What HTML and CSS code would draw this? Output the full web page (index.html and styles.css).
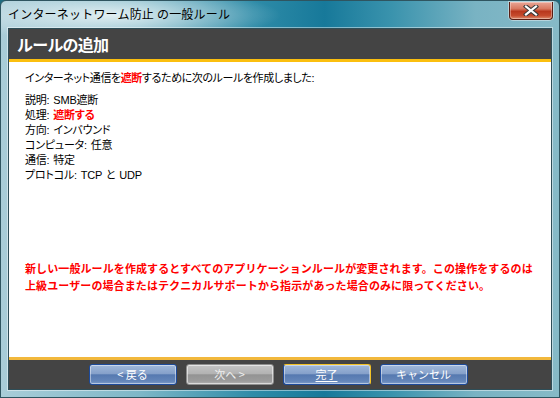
FILE: index.html
```html
<!DOCTYPE html>
<html lang="ja">
<head>
<meta charset="utf-8">
<title>インターネットワーム防止 の一般ルール</title>
<link rel="stylesheet" href="styles.css">
</head>
<body>
<div class="window">
  <div class="titlebar">
    <span class="title">インターネットワーム防止 の一般ルール</span>
    <button class="close" aria-label="閉じる">
      <svg width="16" height="11" viewBox="0 0 16 11">
        <path d="M3 1.5 L13 9.5 M13 1.5 L3 9.5" stroke="#3a3a3a" stroke-width="4.2" stroke-linecap="square"/>
        <path d="M3 1.5 L13 9.5 M13 1.5 L3 9.5" stroke="#ffffff" stroke-width="2.2" stroke-linecap="square"/>
      </svg>
    </button>
  </div>
  <div class="client">
    <div class="header">ルールの追加</div>
    <div class="content">
      <p class="intro">インターネット通信を<b class="red">遮断</b>するために次のルールを作成しました:</p>
      <ul class="props">
        <li>説明: SMB遮断</li>
        <li>処理: <b class="red">遮断する</b></li>
        <li>方向: インバウンド</li>
        <li>コンピュータ: 任意</li>
        <li>通信: 特定</li>
        <li>プロトコル: TCP と UDP</li>
      </ul>
      <p class="warning">新しい一般ルールを作成するとすべてのアプリケーションルールが変更されます。この操作をするのは<br>上級ユーザーの場合またはテクニカルサポートから指示があった場合のみに限ってください。</p>
    </div>
    <div class="footer">
      <button class="btn">&lt; 戻る</button>
      <button class="btn disabled">次へ &gt;</button>
      <button class="btn default"><u>完了</u></button>
      <button class="btn">キャンセル</button>
    </div>
  </div>
</div>
</body>
</html>
```

FILE: styles.css
```css
html, body {
  margin: 0;
  padding: 0;
  background: #1e6c80;
}

body {
  font-family: "Noto Sans CJK JP", "Noto Sans", sans-serif;
}

.window {
  width: 560px;
  height: 398px;
  box-sizing: border-box;
  display: flex;
  flex-direction: column;
  background:
    radial-gradient(ellipse 170px 26px at 110px 14px, rgba(255,255,255,0.75), rgba(255,255,255,0) 100%),
    linear-gradient(90deg, #a9cdd8 0%, #7db7c7 25%, #2f8ca8 45%, #17799a 58%, #3a93ad 70%, #79b3c3 85%, #86bac7 100%);
  border: 1px solid #2f5560;
  border-radius: 6px 6px 0 0;
  overflow: hidden;
}

.titlebar {
  height: 27px;
  display: flex;
  align-items: flex-start;
  flex-shrink: 0;
}

.title {
  font-size: 12px;
  line-height: 16px;
  color: #000;
  margin: 5px 0 0 7px;
  white-space: nowrap;
  letter-spacing: 0.2px;
}

.close {
  margin: 1px 6px 0 auto;
  width: 44px;
  height: 18px;
  padding: 0;
  border: 1px solid #5a1e14;
  border-top: none;
  border-radius: 0 0 4px 4px;
  background: linear-gradient(#e9a696 0%, #d9785f 40%, #b8371d 55%, #c54a2c 80%, #dd8d6f 100%);
  box-shadow: inset 0 0 0 1px rgba(255,255,255,0.35), 0 0 0 1px rgba(255,255,255,0.4);
  display: flex;
  align-items: center;
  justify-content: center;
}

.client {
  flex: 1;
  margin: 0 7px 7px 7px;
  display: flex;
  flex-direction: column;
  border: 1px solid #2e4e58;
  box-shadow: 0 0 0 1px rgba(255,255,255,0.45);
  background: #444444;
}

.header {
  height: 33px;
  box-sizing: border-box;
  padding-left: 8px;
  display: flex;
  align-items: center;
  color: #fff;
  font-weight: bold;
  font-size: 16px;
  letter-spacing: -0.8px;
  border-bottom: 3px solid #fbbf0f;
  background: #444444;
}

.content {
  flex: 1;
  background: #fff;
  padding: 9px 16px 0 16px;
  font-family: "Liberation Sans", "Noto Sans CJK JP", sans-serif;
  font-size: 11px;
  color: #000;
  border-bottom: 3px solid #f2b83c;
  font-feature-settings: "palt";
}

.intro {
  margin: 0 0 7px 0;
  line-height: 15px;
  letter-spacing: -0.4px;
}

.props {
  list-style: none;
  margin: 0;
  padding: 0;
  line-height: 15px;
  letter-spacing: -0.2px;
  word-spacing: 1px;
}

.red {
  color: #ff0000;
  font-weight: bold;
}

.warning {
  margin: 78px 0 0 0;
  color: #ff0000;
  font-weight: bold;
  font-size: 11px;
  line-height: 17px;
  letter-spacing: 0.1px;
  white-space: nowrap;
  font-feature-settings: normal;
}

.footer {
  height: 29px;
  display: flex;
  justify-content: center;
  align-items: flex-start;
  gap: 9px;
  padding: 4px 4px 0 0;
  box-sizing: border-box;
  background: #444444;
}

.btn {
  width: 88px;
  height: 21px;
  padding: 0;
  font-family: "Noto Sans CJK JP", "Noto Sans", sans-serif;
  font-size: 11px;
  line-height: 17px;
  color: #fff;
  border: 1px solid #1d4a9a;
  border-radius: 3px;
  background: linear-gradient(#a0b8da 0%, #86a1ca 45%, #5679b0 52%, #6486ba 85%, #819fcc 100%);
  box-shadow: inset 0 0 0 1px rgba(255,255,255,0.45);
}

.btn.disabled {
  color: #f0f0f0;
  border-color: #8e8e8e;
  background: linear-gradient(#c4c4c4 0%, #b3b3b3 45%, #939393 52%, #9c9c9c 85%, #b4b4b4 100%);
  box-shadow: inset 0 0 0 1px rgba(255,255,255,0.55);
}

.btn.default {
  border-color: #f3c226 #f3c226 #1d4a9a #1d4a9a;
}

.btn u {
  text-decoration-thickness: 1px;
  text-underline-offset: 2px;
}
```
